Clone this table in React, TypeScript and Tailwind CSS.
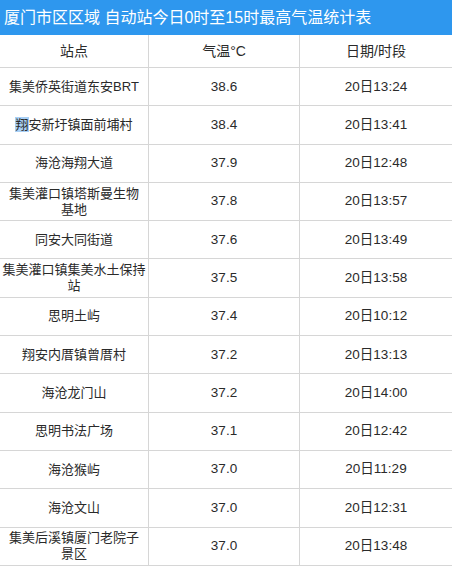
type Row = { name: React.ReactNode; temp: string; time: string }

const rows: Row[] = [
  { name: '集美侨英街道东安BRT', temp: '38.6', time: '20日13:24' },
  {
    name: (
      <>
        <span className="bg-[#a9d0f5]">翔</span>安新圩镇面前埔村
      </>
    ),
    temp: '38.4',
    time: '20日13:41',
  },
  { name: '海沧海翔大道', temp: '37.9', time: '20日12:48' },
  {
    name: (
      <>
        集美灌口镇塔斯曼生物
        <br />
        基地
      </>
    ),
    temp: '37.8',
    time: '20日13:57',
  },
  { name: '同安大同街道', temp: '37.6', time: '20日13:49' },
  {
    name: (
      <>
        集美灌口镇集美水土保持
        <br />
        站
      </>
    ),
    temp: '37.5',
    time: '20日13:58',
  },
  { name: '思明土屿', temp: '37.4', time: '20日10:12' },
  { name: '翔安内厝镇曾厝村', temp: '37.2', time: '20日13:13' },
  { name: '海沧龙门山', temp: '37.2', time: '20日14:00' },
  { name: '思明书法广场', temp: '37.1', time: '20日12:42' },
  { name: '海沧猴屿', temp: '37.0', time: '20日11:29' },
  { name: '海沧文山', temp: '37.0', time: '20日12:31' },
  {
    name: (
      <>
        集美后溪镇厦门老院子
        <br />
        景区
      </>
    ),
    temp: '37.0',
    time: '20日13:48',
  },
]

const font = { fontFamily: '"Liberation Sans", "Noto Sans CJK SC", sans-serif' }

export default function App() {
  return (
    <div className="w-[452px] h-[570px] overflow-hidden bg-white text-[#2a2a2a]" style={font}>
      <div className="h-[35px] bg-[#2e97ee] flex items-center pl-[4px] text-white text-[16px] whitespace-nowrap">
        厦门市区区域 自动站今日0时至15时最高气温统计表
      </div>

      <div className="grid grid-cols-[149px_151px_152px] h-[33px] border-b-[1.5px] border-[#d6d6d6] text-[14px]">
        <div className="flex items-center justify-center border-r-[1.5px] border-[#d6d6d6]">站点</div>
        <div className="flex items-center justify-center border-r-[1.5px] border-[#d6d6d6]">气温°C</div>
        <div className="flex items-center justify-center">日期/时段</div>
      </div>

      {rows.map((r, i) => (
        <div
          key={i}
          className="grid grid-cols-[149px_151px_152px] h-[38.3px] border-b-[1.5px] border-[#d6d6d6] text-[13.5px]"
        >
          <div className="flex items-center justify-center text-center leading-[16px] whitespace-nowrap text-[13px] border-r-[1.5px] border-[#d6d6d6]">
            <span>{r.name}</span>
          </div>
          <div className="flex items-center justify-center border-r-[1.5px] border-[#d6d6d6]">{r.temp}</div>
          <div className="flex items-center justify-center">{r.time}</div>
        </div>
      ))}
    </div>
  )
}
